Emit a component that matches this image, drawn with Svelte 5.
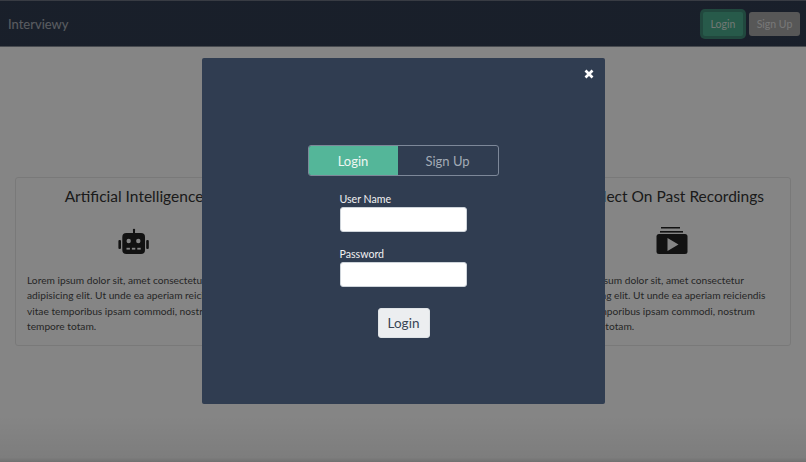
<script>
  const lorem =
    'Lorem ipsum dolor sit, amet consectetur adipisicing elit. Ut unde ea aperiam reiciendis vitae temporibus ipsam commodi, nostrum tempore totam.';
</script>

<div class="page">
  <nav class="navbar">
    <span class="brand">Interviewy</span>
    <div class="nav-actions">
      <button class="nav-btn login">Login</button>
      <button class="nav-btn signup">Sign Up</button>
    </div>
  </nav>

  <section class="cards">
    <article class="card">
      <h2>Artificial Intelligence</h2>
      <svg class="icon" viewBox="0 0 32 28" width="32" height="28" aria-hidden="true">
        <rect x="15" y="4" width="2" height="4" fill="#222" />
        <circle cx="16" cy="4" r="1.2" fill="#222" />
        <rect x="4.3" y="7" width="22.7" height="21" rx="4" fill="#222" />
        <rect x="0.4" y="14" width="2.6" height="9" rx="1.1" fill="#222" />
        <rect x="28.2" y="14" width="2.6" height="9" rx="1.1" fill="#222" />
        <circle cx="10.7" cy="15" r="2.2" fill="#fff" />
        <circle cx="20.3" cy="15" r="2.2" fill="#fff" />
        <rect x="8.5" y="21.8" width="3.4" height="1.8" fill="#fff" />
        <rect x="13.9" y="21.8" width="3.4" height="1.8" fill="#fff" />
        <rect x="19.3" y="21.8" width="3.4" height="1.8" fill="#fff" />
      </svg>
      <p>{lorem}</p>
    </article>

    <article class="card"></article>

    <article class="card">
      <h2>Reflect On Past Recordings</h2>
      <svg class="icon" viewBox="0 0 32 28" width="32" height="28" aria-hidden="true">
        <rect x="5" y="1" width="19" height="1.5" fill="#222" />
        <rect x="4" y="5" width="23" height="1.6" fill="#222" />
        <rect x="0.5" y="8" width="31" height="20" rx="2.5" fill="#222" />
        <path d="M11.5 12 L22.5 18.5 L11.5 25 Z" fill="#fff" />
      </svg>
      <p>{lorem}</p>
    </article>
  </section>

  <div class="overlay">
    <div class="modal">
      <button class="close" aria-label="Close">
        <svg viewBox="0 0 10 10" width="10" height="10" aria-hidden="true">
          <path d="M1.5 1.5 L8.5 8.5 M8.5 1.5 L1.5 8.5" stroke="#fff" stroke-width="2.7" fill="none" />
        </svg>
      </button>

      <div class="tabs">
        <button class="tab active">Login</button>
        <button class="tab">Sign Up</button>
      </div>

      <form class="form">
        <label for="username">User Name</label>
        <input id="username" type="text" />
        <label class="second" for="password">Password</label>
        <input id="password" type="password" />
        <button class="submit" type="button">Login</button>
      </form>
    </div>
  </div>
</div>

<style>
  :global(body) {
    margin: 0;
    background: #fff;
    font-family: Lato, 'Open Sans', sans-serif;
  }

  .page {
    position: relative;
    width: 806px;
    height: 462px;
    overflow: hidden;
    background: #fff;
  }

  .navbar {
    box-sizing: border-box;
    height: 47px;
    padding: 0 6px 0 8px;
    display: flex;
    align-items: center;
    justify-content: space-between;
    background: #303c51;
    border-top: 1px solid #6b7280;
    border-bottom: 1px solid #8a909a;
  }

  .brand {
    font-size: 13px;
    color: #fff;
    opacity: 0.6;
  }

  .nav-actions {
    display: flex;
    gap: 6px;
    align-items: center;
  }

  .nav-btn {
    font-family: inherit;
    padding: 0;
    border: none;
    border-radius: 3px;
    height: 24px;
  }

  .login {
    width: 40px;
    font-size: 10.5px;
    background: #4aac8d;
    color: #d8e4df;
    box-shadow: 0 0 0 3px #3f8a76;
    border-radius: 2px;
  }

  .signup {
    width: 51px;
    font-size: 10.5px;
    background: #a6a6a6;
    color: #e4e4e4;
  }

  .cards {
    display: grid;
    grid-template-columns: repeat(3, 238px);
    gap: 31px;
    padding: 130px 15px 0;
  }

  .card {
    box-sizing: border-box;
    height: 169px;
    padding: 8px 11px 0;
    border: 1px solid #e8e8e8;
    border-radius: 3px;
    color: #4a4a4a;
  }

  h2 {
    margin: 0;
    font-size: 15.5px;
    font-weight: 400;
    line-height: 20px;
    text-align: center;
    white-space: nowrap;
    color: #333;
  }

  .icon {
    display: block;
    margin: 20px auto 0;
  }

  .card p {
    margin: 19px 0 0;
    font-size: 10.2px;
    line-height: 15.3px;
  }

  .overlay {
    position: absolute;
    inset: 0;
    display: flex;
    justify-content: center;
    align-items: flex-start;
    padding-top: 58px;
    background: linear-gradient(to bottom, rgba(0, 0, 0, 0.48) 0, rgba(0, 0, 0, 0.48) 90%, rgba(0, 0, 0, 0.51) 99%, rgba(0, 0, 0, 0.56) 100%);
  }

  .modal {
    position: relative;
    box-sizing: border-box;
    width: 403px;
    height: 346px;
    padding-top: 87px;
    display: flex;
    flex-direction: column;
    align-items: center;
    background: #303d51;
    border-radius: 2px;
  }

  .close {
    position: absolute;
    top: 11px;
    right: 11px;
    padding: 0;
    width: 10px;
    height: 10px;
    display: flex;
    align-items: center;
    justify-content: center;
    background: none;
    border: none;
  }

  .tabs {
    box-sizing: border-box;
    width: 191px;
    height: 31px;
    display: flex;
    border: 1px solid #7d8899;
    border-radius: 3px;
    overflow: hidden;
  }

  .tab {
    flex: 1;
    padding: 0;
    font-family: inherit;
    font-size: 13px;
    border: none;
    background: none;
    color: #a3abb6;
  }

  .tab.active {
    flex: 0 0 89px;
    background: #54b699;
    color: #eef6f3;
  }

  .form {
    width: 127px;
    margin-top: 16px;
    display: flex;
    flex-direction: column;
  }

  label {
    font-size: 10.6px;
    line-height: 14px;
    color: #f1f1f1;
  }

  .second {
    margin-top: 15px;
  }

  input {
    box-sizing: border-box;
    width: 127px;
    height: 25px;
    margin-top: 1px;
    border: 1px solid #ced4da;
    border-radius: 3px;
    background: #fff;
  }

  .submit {
    align-self: flex-start;
    width: 52px;
    height: 30px;
    margin: 21px 0 0 38px;
    padding: 0;
    font-family: inherit;
    font-size: 13.5px;
    border: 1px solid #dfe3e6;
    border-radius: 3px;
    background: #eceef0;
    color: #3a4554;
  }
</style>
